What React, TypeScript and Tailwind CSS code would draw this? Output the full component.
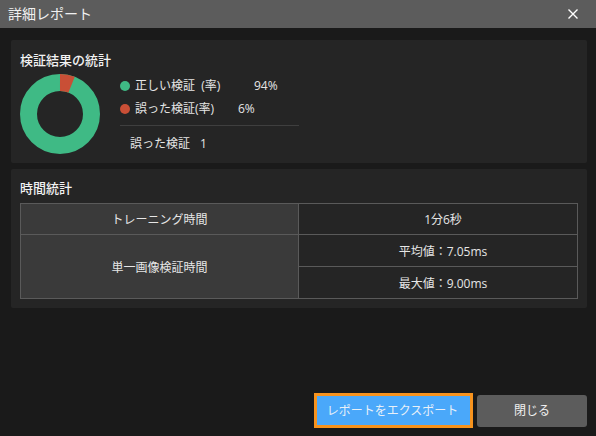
export default function App() {
  const font = { fontFamily: '"Segoe UI", "Open Sans", "Noto Sans CJK JP", sans-serif' };
  const r = 31.5;
  const c = 2 * Math.PI * r;
  return (
    <div className="w-[596px] h-[436px] bg-[#1a1a1a] flex flex-col text-[12px] text-[#e6e6e6] overflow-hidden" style={font}>
      <div className="h-[28px] bg-[#5c5c5c] flex items-center justify-between pl-[8px] pr-[16px] shrink-0">
        <span className="text-[14px] leading-none text-[#f0f0f0]">詳細レポート</span>
        <svg width="12" height="12" viewBox="0 0 12 12" className="mr-[1px]" fill="none" stroke="#ffffff" strokeWidth="1.4">
          <path d="M1.5 1.5 L10.5 10.5 M10.5 1.5 L1.5 10.5" />
        </svg>
      </div>
      <div className="flex-1 flex flex-col pr-[9px] pl-[11px] pt-[12px] pb-[8px]">
        <section className="h-[123px] w-[576px] bg-[#252525] rounded-[2px] px-[9px] pt-[10px]">
          <h2 className="text-[13px] leading-[20px] font-medium text-[#f2f2f2]">検証結果の統計</h2>
          <div className="flex mt-[4px]">
            <svg width="80" height="80" viewBox="0 0 80 80" className="shrink-0">
              <circle cx="40" cy="40" r={r} fill="none" stroke="#3fba85" strokeWidth="17" />
              <circle cx="40" cy="40" r={r} fill="none" stroke="#c94f36" strokeWidth="17" strokeDasharray={`${c * 0.06} ${c}`} transform="rotate(-90 40 40)" />
            </svg>
            <div className="ml-[20px] w-[179px] flex flex-col">
              <div className="flex items-center h-[23px]">
                <span className="w-[10px] h-[10px] rounded-full bg-[#3fba85]" />
                <span className="ml-[5px] w-[119px] whitespace-pre">正しい検証  (率)</span>
                <span>94%</span>
              </div>
              <div className="flex items-center h-[23px]">
                <span className="w-[10px] h-[10px] rounded-full bg-[#c94f36]" />
                <span className="ml-[5px] w-[103px]">誤った検証(率)</span>
                <span>6%</span>
              </div>
              <div className="border-t border-[#3f3f3f] mt-[5px] pl-[10px] pt-[9px] leading-[18px]">
                誤った検証<span className="ml-[10px]">1</span>
              </div>
            </div>
          </div>
        </section>
        <section className="h-[139px] w-[576px] mt-[6px] bg-[#252525] rounded-[2px] px-[9px] pt-[9px]">
          <h2 className="text-[13px] leading-[20px] font-medium text-[#f2f2f2]">時間統計</h2>
          <table className="mt-[5px] w-[558px] table-fixed border-collapse text-center">
            <tbody>
              <tr className="h-[31px]">
                <td className="w-[278px] border border-[#5a5a5a] bg-[#3a3a3a] pt-[2px]">トレーニング時間</td>
                <td className="border border-[#5a5a5a] pl-[10px] pt-[2px]">1分6秒</td>
              </tr>
              <tr className="h-[32px]">
                <td rowSpan={2} className="border border-[#5a5a5a] bg-[#3a3a3a] pt-[2px]">単一画像検証時間</td>
                <td className="border border-[#5a5a5a] pl-[10px] pt-[2px]">平均値：7.05ms</td>
              </tr>
              <tr className="h-[32px]">
                <td className="border border-[#5a5a5a] pl-[10px] pt-[2px]">最大値：9.00ms</td>
              </tr>
            </tbody>
          </table>
        </section>
        <div className="mt-auto flex justify-end items-center gap-[4px]">
          <button className="w-[159px] h-[35px] bg-[#4aa8fa] border-[3px] border-[#f7931e] text-[#e8f0f8] pr-[2px]">レポートをエクスポート</button>
          <button className="w-[110px] h-[32px] bg-[#5c5c5c] rounded-[3px] text-[#f0f0f0]">閉じる</button>
        </div>
      </div>
    </div>
  );
}
